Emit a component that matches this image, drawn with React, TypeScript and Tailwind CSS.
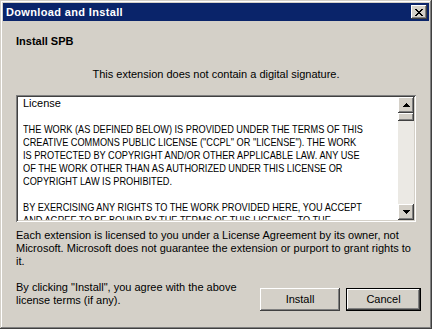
import React from "react";

const bevelBtn =
  "shadow-[inset_-1px_-1px_#404040,inset_1px_1px_#ffffff,inset_-2px_-2px_#808080,inset_2px_2px_#d4d0c8]";

function CloseGlyph() {
  const rows = [
    [0, 2, 6, 2],
    [1, 2, 5, 2],
    [2, 4],
    [3, 2],
    [2, 4],
    [1, 2, 5, 2],
    [0, 2, 6, 2],
  ];
  return (
    <svg width="8" height="7" viewBox="0 0 8 7" shapeRendering="crispEdges">
      {rows.map((r, y) =>
        r.length === 4 ? (
          <g key={y}>
            <rect x={r[0]} y={y} width={r[1]} height={1} fill="#000" />
            <rect x={r[2]} y={y} width={r[3]} height={1} fill="#000" />
          </g>
        ) : (
          <rect key={y} x={r[0]} y={y} width={r[1]} height={1} fill="#000" />
        )
      )}
    </svg>
  );
}

function Arrow({ up }: { up: boolean }) {
  const rows = [
    [3, 1],
    [2, 3],
    [1, 5],
    [0, 7],
  ];
  const ordered = up ? rows : [...rows].reverse();
  return (
    <svg width="7" height="4" viewBox="0 0 7 4" shapeRendering="crispEdges">
      {ordered.map((r, y) => (
        <rect key={y} x={r[0]} y={y} width={r[1]} height={1} fill="#000" />
      ))}
    </svg>
  );
}

const licenseLines = [
  "THE WORK (AS DEFINED BELOW) IS PROVIDED UNDER THE TERMS OF THIS",
  'CREATIVE COMMONS PUBLIC LICENSE ("CCPL" OR "LICENSE"). THE WORK',
  "IS PROTECTED BY COPYRIGHT AND/OR OTHER APPLICABLE LAW. ANY USE",
  "OF THE WORK OTHER THAN AS AUTHORIZED UNDER THIS LICENSE OR",
  "COPYRIGHT LAW IS PROHIBITED.",
  "",
  "BY EXERCISING ANY RIGHTS TO THE WORK PROVIDED HERE, YOU ACCEPT",
  "AND AGREE TO BE BOUND BY THE TERMS OF THIS LICENSE. TO THE",
];

export default function App() {
  return (
    <div className="w-[432px] h-[329px] bg-[#d4d0c8] p-[3px] flex flex-col text-black text-[11px] leading-[13px] font-['Liberation_Sans',Arial,sans-serif] shadow-[inset_-1px_-1px_#404040,inset_1px_1px_#d4d0c8,inset_-2px_-2px_#808080,inset_2px_2px_#ffffff]">
      {/* Title bar */}
      <div className="h-[18px] bg-[#0a246a] flex items-center justify-between pl-[3px] pr-[2px]">
        <span className="text-white font-bold tracking-[0.35px] whitespace-nowrap">
          Download and Install
        </span>
        <div
          className={`w-[16px] h-[14px] bg-[#d4d0c8] flex items-center justify-center ${bevelBtn}`}
        >
          <CloseGlyph />
        </div>
      </div>

      {/* Body */}
      <div className="flex-1 flex flex-col px-[13px] pt-[14px]">
        <div className="font-bold whitespace-nowrap">Install SPB</div>
        <div className="mt-[20px] text-center whitespace-nowrap">
          This extension does not contain a digital signature.
        </div>

        {/* License box */}
        <div className="mt-[14px] h-[127px] flex bg-white p-[2px] shadow-[inset_1px_1px_#808080,inset_-1px_-1px_#ffffff,inset_2px_2px_#404040,inset_-2px_-2px_#d4d0c8]">
          <div className="flex-1 overflow-hidden pl-[5px]">
            <div className="h-[13px] whitespace-nowrap">License</div>
            <div className="h-[13px]" />
            {licenseLines.map((l, i) => (
              <div key={i} className="h-[13px] w-[400px] whitespace-nowrap">
                <span className="inline-block origin-left scale-x-[0.835]">{l}</span>
              </div>
            ))}
          </div>
          <div className="w-[16px] flex flex-col bg-[#ebe9e4]">
            <div
              className={`h-[16px] bg-[#d4d0c8] flex items-center justify-center ${bevelBtn}`}
            >
              <Arrow up />
            </div>
            <div className={`h-[8px] bg-[#d4d0c8] ${bevelBtn}`} />
            <div className="flex-1" />
            <div
              className={`h-[16px] bg-[#d4d0c8] flex items-center justify-center ${bevelBtn}`}
            >
              <Arrow up={false} />
            </div>
          </div>
        </div>

        <div className="mt-[7px]">
          <div className="whitespace-nowrap">
            Each extension is licensed to you under a License Agreement by its owner, not
          </div>
          <div className="whitespace-nowrap">
            Microsoft. Microsoft does not guarantee the extension or purport to grant rights to
          </div>
          <div className="whitespace-nowrap">it.</div>
        </div>

        <div className="mt-[13px] flex items-start">
          <div>
            <div className="whitespace-nowrap">By clicking "Install", you agree with the above</div>
            <div className="whitespace-nowrap">license terms (if any).</div>
          </div>
          <div className="ml-auto -mr-[5px] mt-[7px] flex gap-[6px]">
            <div
              className={`w-[80px] h-[23px] bg-[#d4d0c8] flex items-center justify-center ${bevelBtn}`}
            >
              Install
            </div>
            <div className="w-[75px] h-[23px] border border-black">
              <div className="w-full h-full flex items-center justify-center shadow-[inset_-1px_-1px_#404040,inset_1px_1px_#ffffff,inset_-2px_-2px_#808080]">
                Cancel
              </div>
            </div>
          </div>
        </div>
      </div>
    </div>
  );
}
